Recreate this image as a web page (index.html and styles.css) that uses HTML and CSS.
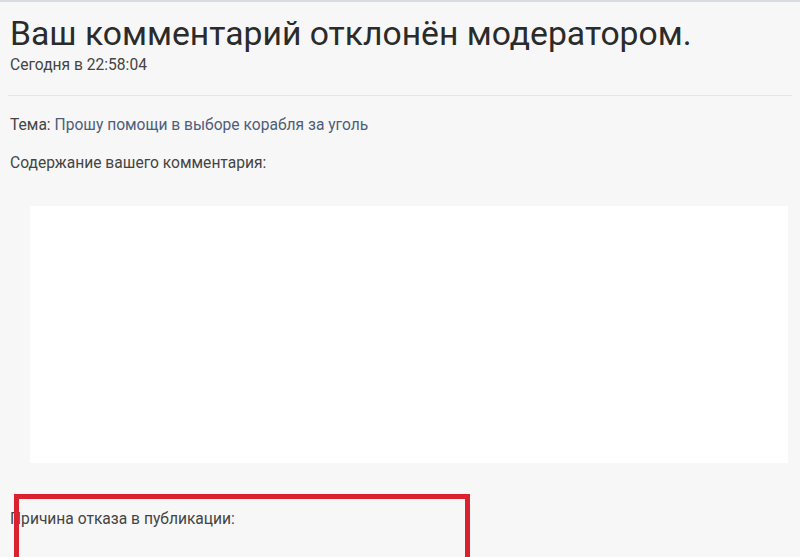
FILE: index.html
```html
<!DOCTYPE html>
<html lang="ru">
<head>
    <meta charset="UTF-8">
    <title>Комментарий отклонён</title>
    <link rel="stylesheet" href="styles.css">
</head>
<body>
    <div class="page">
        <div class="header">
            <h1 class="title">Ваш комментарий отклонён модератором.</h1>
            <div class="date">Сегодня в 22:58:04</div>
        </div>

        <p class="line">Тема: <a href="#" class="topic">Прошу помощи в выборе корабля за уголь</a></p>
        <p class="line">Содержание вашего комментария:</p>

        <!-- текст комментария -->
        <div class="comment-body"></div>

        <div class="reason">
            <p class="line">Причина отказа в публикации:</p>
            <div class="highlight"></div>
        </div>
    </div>
</body>
</html>
```

FILE: styles.css
```css
body {
    margin: 0;
    background: #f7f7f7;
    font-family: Roboto, "Liberation Sans", sans-serif;
    color: #333;
    border-top: 2px solid #d6dbe4;
    overflow: hidden;
    height: 555px;
}
.page {
    padding: 0 8px;
}
.header {
    padding: 0 2px 21px;
    border-bottom: 1px solid #e6e6e6;
}
.title {
    font-size: 33.7px;
    font-weight: 400;
    margin: 12px 0 0;
    color: #2b2b2b;
}
.date {
    font-size: 15.6px;
    margin-top: 3px;
    color: #444;
}
.line {
    font-size: 15.6px;
    margin: 20px 2px 0;
    color: #444;
}
.topic {
    color: #4e5d7a;
    text-decoration: none;
}
.comment-body {
    background: #fff;
    margin: 34px 4px 0 22px;
    height: 257px;
}
.reason {
    position: relative;
    padding-top: 27px;
}
.reason .line {
    margin-top: 20px;
}
.highlight {
    position: absolute;
    left: 6px;
    top: 31px;
    width: 446px;
    height: 70px;
    border: 5px solid #d92130;
}
```
